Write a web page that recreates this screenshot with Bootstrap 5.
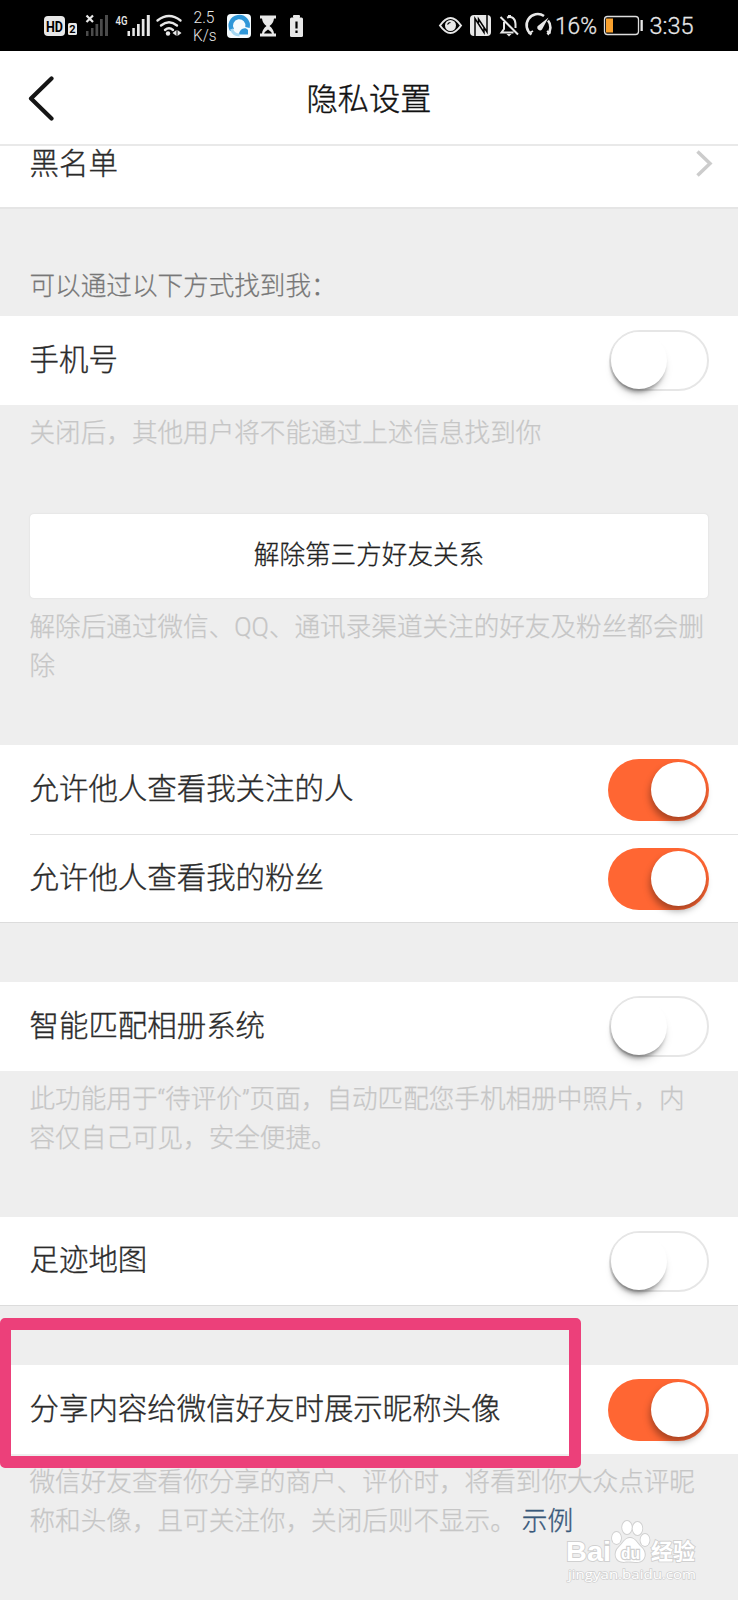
<!DOCTYPE html>
<html lang="zh-CN">
<head>
<meta charset="utf-8">
<meta name="viewport" content="width=device-width, initial-scale=1">
<title>隐私设置</title>
<link href="https://cdn.jsdelivr.net/npm/bootstrap@5.3.0/dist/css/bootstrap.min.css" rel="stylesheet">
<style>
  body { background: #eee; color: #333; font-family: Roboto, "Noto Sans CJK SC", sans-serif; overflow-x: hidden; }
  .phone { width: 738px; height: 1600px; overflow: hidden; }
  .statusbar { height: 51px; background: #000; color: #e8e8e8; }
  .statusbar svg { display: block; width: 738px; height: 51px; }
  .titlebar { height: 95px; border-bottom: 2px solid #e9e9e9; padding-left: 26px; }
  .titlebar h1 { font-size: 31.2px; font-weight: 300; line-height: 46px; padding-top: 5px; color: #111; -webkit-text-stroke: .4px #111; }
  .cell { height: 89px; padding: 0 29px 0 30px; font-size: 29.45px; line-height: 40px; font-weight: 300; color: #2b2b2b; -webkit-text-stroke: .35px #2b2b2b; }
  .cell > span:first-child { padding-bottom: 2px; margin-left: -.5px; }
  .cell-cut { height: 63px; padding-right: 25px; align-items: flex-start; border-bottom: 2px solid #e5e5e5; }
  .cell-cut > span { line-height: 36px; }
  .cell-line { border-bottom: 1px solid #dcdcdc; }
  .inset-line { height: 1px; margin-left: 30px; background: #e2e2e2; }
  .note { padding-left: 29.5px; padding-right: 20px; font-size: 25.6px; line-height: 39px; font-weight: 300; color: #c6c6c6; white-space: nowrap; -webkit-text-stroke: .25px #c6c6c6; }
  .note a { color: #38587a; margin-left: 6px; -webkit-text-stroke: .35px #38587a; }
  .caption-text { height: 107px; padding: 58px 30px 0 29.5px; font-size: 25.6px; line-height: 39px; font-weight: 300; color: #777; -webkit-text-stroke: .25px #777; }
  .unlink { height: 84px; margin: 0 30px; font-size: 25.6px; font-weight: 300; color: #222; -webkit-text-stroke: .3px #222; border-radius: 4px; border: 0; background: #fff; box-shadow: 0 0 2px rgba(0,0,0,.1); padding: 0 0 1px; }
  .toggle { width: 101px; height: 62px; border-radius: 31px; background: #ff6633; padding: 3px 3px; display: flex; justify-content: flex-end; }
  .toggle i { width: 55px; height: 55px; border-radius: 50%; background: #fff; box-shadow: -1px 5px 7px rgba(0,0,0,.34); }
  .toggle.off { width: 100px; height: 61px; background: #fff; border: 2px solid #e6e6e6; padding: 0; justify-content: flex-start; }
  .toggle.off i { width: 56px; height: 57px; box-shadow: -1px 5px 4px -2px rgba(0,0,0,.38), 0 8px 8px -2px rgba(0,0,0,.13); }
  .h-59 { height: 59px; } .note-a { height: 109px; padding-top: 9px; } .note-b { height: 147px; padding-top: 10px; }
  .note-c { height: 146px; padding-top: 9px; } .note-d { padding-top: 9px; }
  .highlight { left: 0; top: 1318px; width: 581px; height: 150px; border: 12px solid #ec407a; border-left-width: 11px; border-radius: 5px; }
  .watermark { left: 560px; top: 1515px; }
</style>
</head>
<body>
<div class="phone position-relative">
  <div class="statusbar">
    <svg viewBox="0 0 738 51" fill="#e8e8e8" font-family="Roboto, sans-serif">
      <rect x="44" y="16" width="21" height="20" rx="4"/>
      <text x="46" y="31.500" font-size="15" font-weight="700" fill="#000" textLength="17" lengthAdjust="spacingAndGlyphs">HD</text>
      <rect x="68" y="23" width="9" height="12" rx="1.500"/>
      <text x="69.300" y="33" font-size="11" font-weight="700" fill="#000">2</text>
      <path d="M86.500 15.500l6.500 6.500m0-6.500l-6.500 6.500" stroke="#e8e8e8" stroke-width="2.200"/>
      <g fill="#4b4b4b"><rect x="86" y="31" width="2.500" height="5"/><rect x="91" y="28" width="2.500" height="8"/><rect x="95.500" y="24" width="2.700" height="12"/><rect x="100" y="19" width="2.700" height="17"/><rect x="105" y="15" width="3" height="21"/></g>
      <text x="115.500" y="24.500" font-size="12.500" font-weight="500" textLength="12" lengthAdjust="spacingAndGlyphs">4G</text>
      <rect x="127.500" y="31" width="2.500" height="5"/><rect x="132.300" y="28" width="2.500" height="8"/><rect x="137" y="24" width="2.700" height="12"/><rect x="141.800" y="19" width="2.700" height="17"/><rect x="146.800" y="15" width="3" height="21"/>
      <g fill="none" stroke="#e8e8e8" stroke-width="2.400" stroke-linecap="round"><path d="M157.500 20.500q11.500-9 23 0"/><path d="M161 25.500q8-6.500 16 0"/><path d="M165 30q4-3.500 8 0"/></g>
      <circle cx="168" cy="33.500" r="2.200"/><path d="M172.500 33l4-3v6zM181.500 33l-4-3v6z"/>
      <text x="193.500" y="22.500" font-size="16" font-weight="300" textLength="21" lengthAdjust="spacingAndGlyphs">2.5</text>
      <text x="193" y="41" font-size="16" font-weight="300" textLength="23.500" lengthAdjust="spacingAndGlyphs">K/s</text>
      <rect x="227" y="14" width="24" height="24" rx="4" fill="#f4fafd"/>
      <path d="M232 30a8.500 8.500 0 1 1 15.500-2.500" fill="none" stroke="#2e96d8" stroke-width="4.500"/><path d="M248 34.500h-9c0-5 6-8.500 9-4.500z" fill="#2e96d8"/><path d="M231.500 29q2 6 8 6" fill="none" stroke="#a3d6f1" stroke-width="3"/>
      <path d="M260 15.500h16v3h-2q-.5 4.500-4.500 7.500q4 3 4.500 7.500h2v3h-16v-3h2q.5-4.500 4.500-7.500q-4-3-4.500-7.500h-2z"/><path d="M264 33.500q1-2 4-4q3 2 4 4z" fill="#000"/>
      <rect x="293" y="15" width="7" height="3" rx="1"/><rect x="290" y="17.500" width="13" height="19.500" rx="1.500"/><path d="M296.500 21.500v7m0 2v2.500" stroke="#000" stroke-width="2.200"/>
      <path d="M440 25.500q10.500-15 21 0q-10.500 15-21 0z" fill="none" stroke="#e8e8e8" stroke-width="2"/><circle cx="450.500" cy="25.500" r="5.500"/><path d="M447.500 24.500q1-2 3-2" stroke="#000" fill="none" stroke-width="1.200"/>
      <rect x="470" y="15" width="21" height="21" rx="4"/><path d="M475 36V18.500l9 14V28M478.500 23V19l8.500 13V15" fill="none" stroke="#000" stroke-width="1.500"/>
      <g fill="none" stroke="#e8e8e8" stroke-width="2"><path d="M500.500 17l17.500 17.500M504 22v7l-2.500 3.500h12M507 17.500q8-2 8.500 6.500v4"/><path d="M509.500 17v-2" stroke-width="3"/></g><path d="M506.500 34h5l-2.500 2.500z"/>
      <g fill="none" stroke="#e8e8e8" stroke-width="2.600"><path d="M531.500 34.500a10.500 10.500 0 0 1 12.500-18.500M548 20.500a10.500 10.500 0 0 1-.5 14"/><path d="M528.500 33.500l4.500-2.500M550.500 33.500l-3.500-2.500" stroke-width="2"/></g><path d="M548.500 17.500l-6.500 12a2.800 2.800 0 0 1-4.500-3.200z"/>
      <text x="555" y="34" font-size="23.500" font-weight="300" stroke="#e8e8e8" stroke-width=".3" textLength="42" lengthAdjust="spacingAndGlyphs">16%</text>
      <rect x="604.500" y="16.500" width="34" height="18" rx="3" fill="none" stroke="#ddd" stroke-width="1.300"/><rect x="606" y="18.500" width="7" height="14" fill="#f9a12e"/><rect x="640.500" y="20" width="2.300" height="11"/>
      <text x="649.500" y="34" font-size="23.500" font-weight="300" stroke="#e8e8e8" stroke-width=".3" textLength="44" lengthAdjust="spacingAndGlyphs">3:35</text>
    </svg>
  </div>

  <nav class="titlebar bg-white d-flex align-items-center position-relative">
    <svg width="30" height="46" viewBox="0 0 30 46" fill="none" stroke="#151515" stroke-width="4.200" stroke-linecap="round" stroke-linejoin="round"><path d="M25.500 3.500L5 23.500l20.500 20"/></svg>
    <h1 class="position-absolute start-0 end-0 text-center m-0">隐私设置</h1>
  </nav>

  <main>
    <div class="cell cell-cut bg-white d-flex justify-content-between">
      <span>黑名单</span>
      <svg width="17" height="36" viewBox="0 0 17 36" fill="none" stroke="#ccc" stroke-width="3.500"><path d="M1.500 5.500L14 17.500L1.500 29.500"/></svg>
    </div>
    <div class="caption-text">可以通过以下方式找到我：</div>

    <div class="cell bg-white d-flex align-items-center justify-content-between"><span>手机号</span><span class="toggle off" role="switch"><i></i></span></div>
    <div class="note note-a">关闭后，其他用户将不能通过上述信息找到你</div>

    <div class="d-grid"><button class="unlink" type="button">解除第三方好友关系</button></div>
    <div class="note note-b">解除后通过微信、QQ、通讯录渠道关注的好友及粉丝都会删<br>除</div>

    <div class="cell bg-white d-flex align-items-center justify-content-between"><span>允许他人查看我关注的人</span><span class="toggle" role="switch"><i></i></span></div>
    <div class="bg-white"><div class="inset-line"></div></div>
    <div class="cell cell-line bg-white d-flex align-items-center justify-content-between" style="height:88px"><span>允许他人查看我的粉丝</span><span class="toggle" role="switch"><i></i></span></div>
    <div class="h-59"></div>

    <div class="cell bg-white d-flex align-items-center justify-content-between"><span>智能匹配相册系统</span><span class="toggle off" role="switch"><i></i></span></div>
    <div class="note note-c">此功能用于“待评价”页面，自动匹配您手机相册中照片，内<br>容仅自己可见，安全便捷。</div>

    <div class="cell cell-line bg-white d-flex align-items-center justify-content-between"><span>足迹地图</span><span class="toggle off" role="switch"><i></i></span></div>
    <div class="h-59"></div>

    <div class="cell bg-white d-flex align-items-center justify-content-between"><span>分享内容给微信好友时展示昵称头像</span><span class="toggle" role="switch"><i></i></span></div>
    <div class="note note-d">微信好友查看你分享的商户、评价时，将看到你大众点评昵<br>称和头像，且可关注你，关闭后则不显示。<a class="text-decoration-none">示例</a></div>
  </main>

  <div class="highlight position-absolute"></div>
  <svg class="watermark position-absolute" width="150" height="72" viewBox="0 0 150 72" fill="#fff" stroke="#d0d0d0" stroke-width="1.800" paint-order="stroke" font-family="'Liberation Sans', 'Noto Sans CJK SC', sans-serif">
    <text x="6" y="45.500" font-size="28" font-weight="700" textLength="45" lengthAdjust="spacingAndGlyphs">Bai</text>
    <ellipse cx="56.500" cy="23" rx="4.500" ry="6"/><ellipse cx="67" cy="12.500" rx="4.800" ry="6.500"/><ellipse cx="77.500" cy="13.500" rx="4.800" ry="6.500"/><ellipse cx="85" cy="25" rx="4.500" ry="6"/>
    <path d="M70 23c5 0 7 5 11 9c6 5 5 15-4 15c-4 0-9-1-13 0c-9 0-11-9-5-15c4-4 6-9 11-9z"/>
    <text x="61" y="44" font-size="16" font-weight="700" fill="#fff" stroke-width="2.400" textLength="19" lengthAdjust="spacingAndGlyphs">du</text>
    <text x="91" y="43.500" font-size="22" font-weight="700" textLength="44" lengthAdjust="spacingAndGlyphs">经验</text>
    <text x="8" y="63.500" font-size="13" fill="#fff" stroke-width="1.300" font-family="'Open Sans', sans-serif" textLength="128" lengthAdjust="spacingAndGlyphs">jingyan.baidu.com</text>
  </svg>
</div>
<script src="https://cdn.jsdelivr.net/npm/bootstrap@5.3.0/dist/js/bootstrap.bundle.min.js"></script>
</body>
</html>
